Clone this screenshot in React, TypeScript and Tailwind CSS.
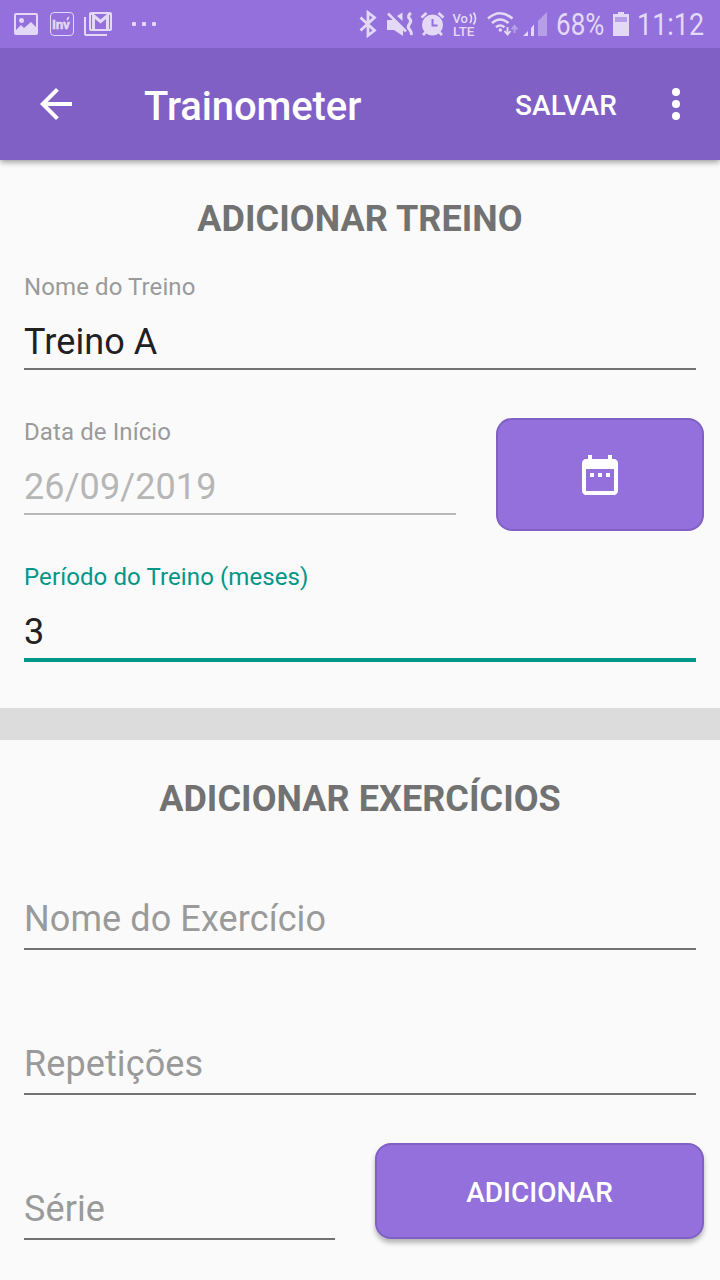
import type { ReactNode } from 'react';

type FieldProps = {
  label: string;
  value?: string;
  state?: 'normal' | 'focused' | 'disabled';
  className?: string;
};

const labelColor = { normal: 'text-[#9a9a9a]', focused: 'text-[#009688]', disabled: 'text-[#9a9a9a]' };
const valueColor = { normal: 'text-[#212121]', focused: 'text-[#212121]', disabled: 'text-[#b6b6b6]' };
const lineStyle = {
  normal: 'h-[2px] bg-[#727272]',
  focused: 'h-[4px] bg-[#009688]',
  disabled: 'h-[2px] bg-[#b8b8b8]',
};

function Field({ label, value, state = 'normal', className = '' }: FieldProps) {
  return (
    <div className={`flex flex-col h-[97px] shrink-0 ${className}`}>
      {value ? (
        <>
          <div className={`h-7 text-2xl leading-7 tracking-[0.1px] whitespace-nowrap ${labelColor[state]}`}>{label}</div>
          <div className={`mt-5 mb-[5px] h-[42px] text-[36px] leading-[42px] tracking-[0.09px] whitespace-nowrap ${valueColor[state]}`}>
            {value}
          </div>
        </>
      ) : (
        <div className="mt-[45px] mb-2 h-[42px] text-[36px] leading-[42px] tracking-[0.1px] whitespace-nowrap text-[#9a9a9a]">
          {label}
        </div>
      )}
      <div className={`shrink-0 ${lineStyle[state]}`} />
    </div>
  );
}

function Heading({ children }: { children: ReactNode }) {
  return (
    <h2 className="h-[42px] text-center text-[36px] leading-[42px] font-bold tracking-[0.06px] text-[#727272]">
      {children}
    </h2>
  );
}

function NotificationIcons() {
  return (
    <svg width="160" height="48" viewBox="0 0 160 48" fill="#e3d9f6" className="shrink-0">
      <path
        fillRule="evenodd"
        d="M16 13h20a2 2 0 0 1 2 2v18a2 2 0 0 1-2 2H16a2 2 0 0 1-2-2V15a2 2 0 0 1 2-2zm0 2v15l5-5 3 3 7-6 5 5V15zM21.500 18a2.500 2.500 0 1 1 0 5 2.500 2.500 0 0 1 0-5z"
      />
      <rect x="50.500" y="12.500" width="23" height="23" rx="3.500" fill="none" stroke="#e3d9f6" />
      <text x="52" y="29" fontSize="13.500" fontWeight="700" fontFamily="Roboto, sans-serif" letterSpacing="-0.2" stroke="#e3d9f6" strokeWidth="0.4">
        Inv
      </text>
      <path d="M67 20l1.800-3" stroke="#e3d9f6" strokeWidth="1.600" />
      <path d="M84 17h2v17h21v2H86a2 2 0 0 1-2-2z" />
      <rect x="89" y="12" width="23" height="19" rx="2" />
      <path d="M94 14h13l-6.500 5.500z" fill="#9370db" />
      <path d="M95 29V19l5.500 4.500L106 19v10z" fill="#9370db" />
      <path d="M91.500 15v14M109.500 15v14" stroke="#9370db" strokeWidth="1" />
      <rect x="132" y="22" width="4" height="4" rx="1" />
      <rect x="142" y="22" width="4" height="4" rx="1" />
      <rect x="152" y="22" width="4" height="4" rx="1" />
    </svg>
  );
}

function SystemIcons() {
  return (
    <svg width="194" height="48" viewBox="354 0 194 48" fill="#e3d9f6" className="shrink-0">
      <path d="M360.500 17.500l14 13-6.500 5V12.500l6.500 5-14 13" fill="none" stroke="#e3d9f6" strokeWidth="2.800" />
      <path d="M387 20h5l3-2.500 8 8V36l-9-6h-7z" />
      <path d="M402.500 12.500v8.500l-5.500-5z" />
      <path d="M389 12.500L408 31" stroke="#9370db" strokeWidth="2" />
      <path d="M388 13.500L406 31.500" stroke="#e3d9f6" strokeWidth="2.500" />
      <path d="M411 13q-4 2.800-1.500 5.500t0 5.500 0 5.500 1.500 5.500" fill="none" stroke="#e3d9f6" strokeWidth="3" />
      <circle cx="432.500" cy="25" r="10.500" />
      <path d="M421.500 17.500l5-4.500M438.500 13l5 4.500M426 32l-3 3M439 32l3 3" stroke="#e3d9f6" strokeWidth="2.800" />
      <path d="M432.500 19v6.500h5" fill="none" stroke="#9370db" strokeWidth="2" />
      <text fontSize="14" fontWeight="500" fontFamily="Roboto, sans-serif">
        <tspan x="452.500" y="22.500" fontSize="13">
          Vo
        </tspan>
        <tspan x="453" y="35.500" fontSize="13.500">
          LTE
        </tspan>
      </text>
      <path d="M470 14q3 4.500 0 9M473.500 12.500q4 6 0 12" fill="none" stroke="#e3d9f6" strokeWidth="1.800" />
      <path
        d="M488 18.500q12-10.500 24.500 0M492 23q8-7 16.500 0M496 27.200q4-3.400 8.500 0"
        fill="none"
        stroke="#e3d9f6"
        strokeWidth="2.600"
      />
      <circle cx="500.300" cy="30" r="1.800" />
      <path d="M507.500 27v7M504.500 31l3 3.500 3-3.500" fill="none" stroke="#e3d9f6" strokeWidth="1.900" />
      <path d="M514.500 33v-7M511.500 29.500l3-3.500 3 3.500" fill="none" stroke="#b9a1e8" strokeWidth="1.900" />
      <path d="M523 36l5-5v5zM531 36v-8l3-3.500V36z" />
      <path d="M538 36V21l9-9v24z" fill="#b79fe7" />
    </svg>
  );
}

function StatusBar() {
  return (
    <div className="relative z-20 flex h-12 shrink-0 items-center bg-[#9370db] text-[#e3d9f6]">
      <NotificationIcons />
      <div className="grow" />
      <SystemIcons />
      <div className="ml-2 w-[50px] text-[31px] leading-9">
        <span className="block w-max origin-left scale-x-[0.84] pt-[2px]">68%</span>
      </div>
      <svg width="16" height="24" viewBox="0 0 16 24" className="ml-[7px] shrink-0">
        <path fill="#e3d9f6" fillRule="evenodd" d="M5 0h6v2h5v22H0V2h5zM2 5v5h12V5z" />
        <path fill="#b79fe7" d="M2 5h12v5H2z" />
      </svg>
      <div className="ml-2 mr-[14px] w-[69px] text-[31px] leading-9">
        <span className="block w-max origin-left scale-x-[0.87] pt-[2px]">11:12</span>
      </div>
    </div>
  );
}

function AppBar() {
  return (
    <header className="relative z-10 flex h-28 shrink-0 items-center bg-[#8160c6] text-white shadow-[0_2px_6px_rgba(0,0,0,0.4)]">
      <svg width="48" height="48" viewBox="0 0 24 24" fill="currentColor" className="ml-8 shrink-0">
        <path d="M20 11H7.830l5.590-5.590L12 4l-8 8 8 8 1.410-1.410L7.830 13H20v-2z" />
      </svg>
      <h1 className="ml-16 grow pt-[6px] text-[40px] leading-[48px] font-medium tracking-[-0.1px]">Trainometer</h1>
      <button className="pt-1 text-[28px] leading-8 font-medium tracking-[0.1px]">SALVAR</button>
      <svg width="48" height="48" viewBox="0 0 24 24" fill="currentColor" className="ml-[35px] mr-5 shrink-0">
        <circle cx="12" cy="6" r="2" />
        <circle cx="12" cy="12" r="2" />
        <circle cx="12" cy="18" r="2" />
      </svg>
    </header>
  );
}

export default function App() {
  return (
    <div className="flex h-[1280px] w-[720px] flex-col overflow-hidden bg-[#fafafa] font-['Roboto',sans-serif]">
      <StatusBar />
      <AppBar />
      <section className="flex h-[548px] shrink-0 flex-col px-6 pt-[38px]">
        <Heading>ADICIONAR TREINO</Heading>
        <Field className="mt-[33px]" label="Nome do Treino" value="Treino A" />
        <div className="mt-12 -mr-2 flex shrink-0 items-start justify-between">
          <Field className="w-[432px]" label="Data de Início" value="26/09/2019" state="disabled" />
          <button
            aria-label="Data"
            className="flex h-[113px] w-[208px] items-center justify-center rounded-2xl border-2 border-[#8160c6] bg-[#9370db] text-white"
          >
            <svg width="48" height="48" viewBox="0 0 24 24" fill="currentColor">
              <path d="M9 11H7v2h2v-2zm4 0h-2v2h2v-2zm4 0h-2v2h2v-2zm2-7h-1V2h-2v2H8V2H6v2H5c-1.110 0-1.990.9-1.990 2L3 20c0 1.100.89 2 2 2h14c1.100 0 2-.9 2-2V6c0-1.100-.9-2-2-2zm0 16H5V9h14v11z" />
            </svg>
          </button>
        </div>
        <Field className="mt-8" label="Período do Treino (meses)" value="3" state="focused" />
      </section>
      <div className="h-8 shrink-0 bg-[#dcdcdc]" />
      <section className="flex grow flex-col px-6 pt-[38px]">
        <Heading>ADICIONAR EXERCÍCIOS</Heading>
        <Field className="mt-[33px]" label="Nome do Exercício" />
        <Field className="mt-12" label="Repetições" />
        <div className="mt-12 -mr-2 flex shrink-0 items-start justify-between">
          <Field className="w-[311px]" label="Série" />
          <button className="h-24 w-[329px] rounded-2xl border-2 border-[#8160c6] bg-[#9370db] pt-1 text-[28px] leading-8 font-medium text-white shadow-[0_4px_5px_rgba(0,0,0,0.28)]">
            ADICIONAR
          </button>
        </div>
      </section>
    </div>
  );
}
